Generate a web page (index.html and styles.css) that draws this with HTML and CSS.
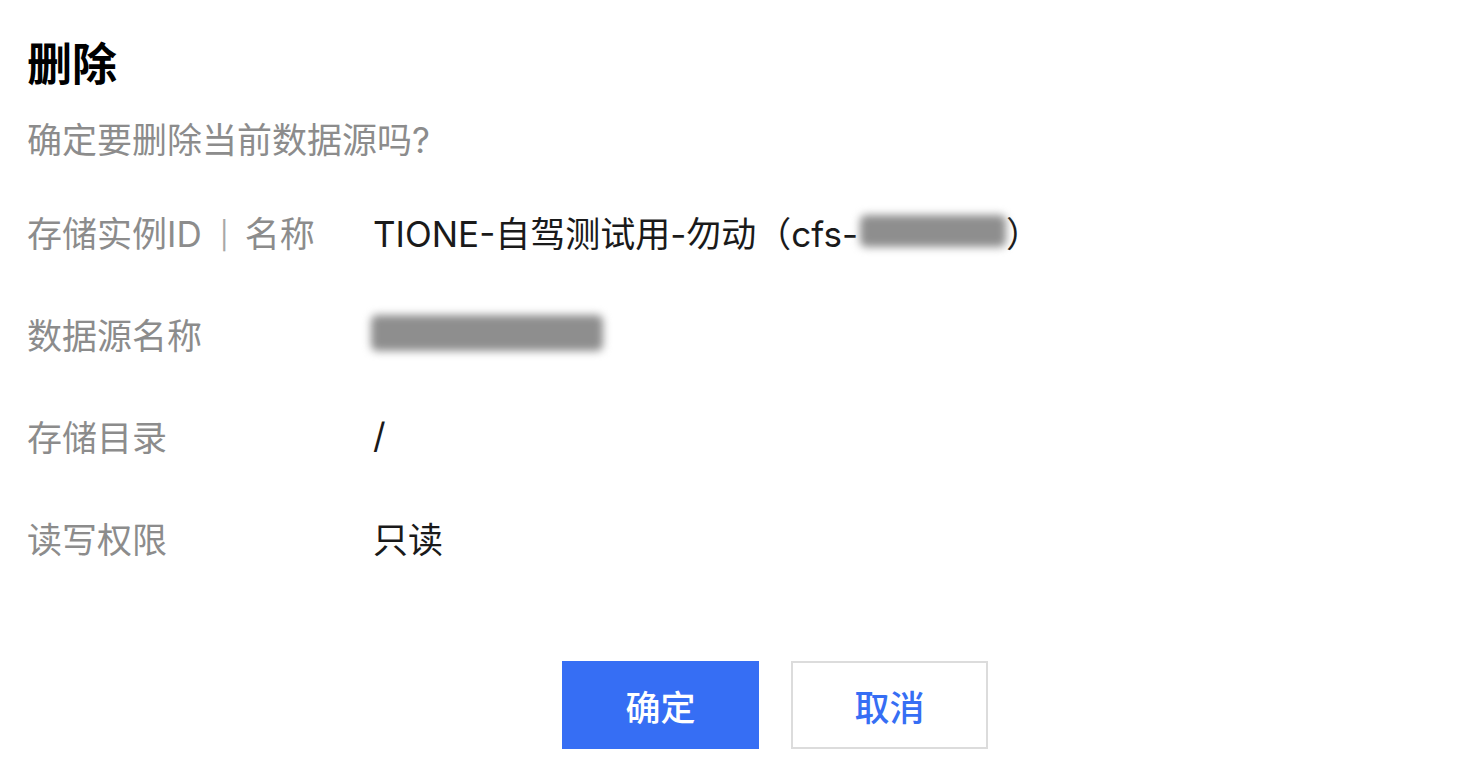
FILE: index.html
```html
<html>
	<head>
		<meta charset="UTF-8">
		<meta name="viewport" content="width=device-width, initial-scale=1.0">
		<title>删除</title>
		<link rel="stylesheet" href="styles.css">
	</head>
	<body>
		<!-- delete confirm dialog -->
		<div class="dialog">
			<h1 class="title">删除</h1>
			<p class="subtitle">确定要删除当前数据源吗?</p>

			<div class="info">
				<div class="row">
					<span class="label">存储实例ID<span class="sep">|</span>名称</span>
					<span class="value">TIONE-自驾测试用-勿动（cfs-<span class="mask mask-id"></span>）</span>
				</div>
				<div class="row">
					<span class="label">数据源名称</span>
					<span class="value"><span class="mask mask-name"></span></span>
				</div>
				<div class="row">
					<span class="label">存储目录</span>
					<span class="value">/</span>
				</div>
				<div class="row">
					<span class="label">读写权限</span>
					<span class="value">只读</span>
				</div>
			</div>

			<div class="footer">
				<button class="btn btn-primary">确定</button>
				<button class="btn btn-default">取消</button>
			</div>
		</div>
	</body>
</html>
```

FILE: styles.css
```css
html {
	background-color: white;
}
body {
	margin: 0;
	font-family: Inter, "Noto Sans CJK SC", sans-serif;
	color: #1a1a1a;
}
.dialog {
	padding: 35px 27px 0 27px;
}
.title {
	margin: 0;
	font-size: 45px;
	line-height: 60px;
	font-weight: bold;
	color: #000;
}
.subtitle {
	margin: 20px 0 15px 0;
	font-size: 35px;
	line-height: 50px;
	color: #8c8c8c;
}
.row {
	display: flex;
	align-items: center;
	height: 102px;
}
.label {
	width: 346px;
	font-size: 35px;
	color: #8c8c8c;
}
	.sep {
		display: inline-block;
		margin: 0 16px 0 18px;
		font-size: 27px;
		vertical-align: 2px;
		color: #a8a8a8;
	}
.value {
	display: flex;
	align-items: center;
	font-size: 35px;
	color: #1a1a1a;
}
	.mask {
		display: inline-block;
		background-color: #8e8e8e;
		filter: blur(4px);
		border-radius: 6px;
	}
	.mask-id {
		width: 146px;
		height: 32px;
		margin-left: 2px;
	}
	.mask-name {
		width: 232px;
		height: 36px;
		margin-left: -2px;
	}
.footer {
	display: flex;
	gap: 32px;
	margin-top: 73px;
	padding-left: 535px;
}
.btn {
	width: 197px;
	height: 88px;
	font-family: "Noto Sans CJK SC", sans-serif;
	font-size: 35px;
	font-weight: 500;
	border-radius: 0;
	cursor: pointer;
}
.btn-primary {
	background-color: #366ef4;
	border: 1px solid #366ef4;
	color: white;
}
.btn-default {
	background-color: white;
	border: 2px solid #dcdcdc;
	color: #366ef4;
}
```
